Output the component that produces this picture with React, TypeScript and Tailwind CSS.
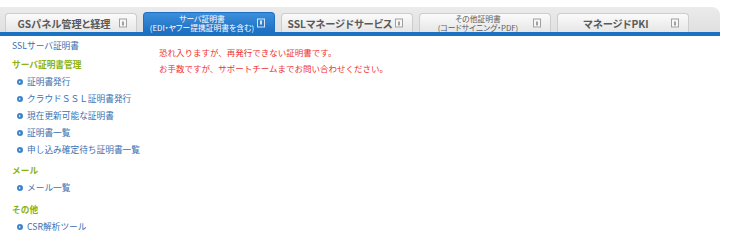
import React from "react";

const font = { fontFamily: '"Noto Sans CJK JP", "Noto Sans", sans-serif' };

function TabIcon({ active }: { active?: boolean }) {
  return (
    <span
      className={
        "inline-flex items-center justify-center w-[8px] h-[9px] border " +
        (active ? "border-white/80" : "border-[#a0a0a0] bg-[#f7f7f7]")
      }
    >
      <span className={"block w-[2px] h-[4px] " + (active ? "bg-white/80" : "bg-[#a0a0a0]")} />
    </span>
  );
}

function Tab({ lines, active }: { lines: string[]; active?: boolean }) {
  return (
    <div
      className={
        "relative w-[132px] rounded-t-[4px] flex items-center justify-center border border-b-0 [font-feature-settings:'palt'] " +
        (active
          ? "bg-gradient-to-b from-[#3b8fdc] to-[#1f6fc2] border-[#1f6fc2] text-white h-[20px]"
          : "bg-gradient-to-b from-[#fbfbfb] to-[#e6e6e6] border-[#cdcdcd] text-[#5a5a5a] h-[19px]")
      }
    >
      <div className="flex-1 flex flex-col items-center justify-center leading-[9px] pl-[2px] pr-[16px]">
        {lines.length === 1 ? (
          <span className="text-[10.2px] font-bold whitespace-nowrap">{lines[0]}</span>
        ) : (
          lines.map((l, i) => (
            <span key={i} className="text-[7.8px] leading-[9px] whitespace-nowrap">
              {l}
            </span>
          ))
        )}
      </div>
      <div className="absolute right-[9px] top-1/2 -translate-y-1/2 flex">
        <TabIcon active={active} />
      </div>
    </div>
  );
}

function Bullet() {
  return (
    <span className="w-[6px] h-[6px] rounded-full bg-[#3d84cc] flex items-center justify-center mr-[4px] shrink-0">
      <span className="block w-0 h-0 border-y-[1.5px] border-y-transparent border-l-[2px] border-l-white ml-[0.5px]" />
    </span>
  );
}

function Item({ children }: { children: React.ReactNode }) {
  return (
    <div className="flex items-center h-[17px] pl-[5px] text-[#3a6fb0] whitespace-nowrap">
      <Bullet />
      <span>{children}</span>
    </div>
  );
}

function Heading({ children, mt }: { children: React.ReactNode; mt: string }) {
  return <div className={"h-[16px] flex items-center font-bold text-[#8cb30f] " + mt}>{children}</div>;
}

export default function App() {
  return (
    <div className="w-[739px] h-[242px] bg-white overflow-hidden" style={font}>
      <div className="pt-[7px]">
        <div className="w-[720px] bg-gradient-to-b from-[#ebebeb] to-[#dedede] rounded-tr-[8px]">
          <div className="flex items-end gap-[6px] pl-[5px] h-[25px]">
            <Tab lines={["GSパネル管理と経理"]} />
            <Tab active lines={["サーバ証明書", "(EDI・ヤフー提携証明書を含む)"]} />
            <Tab lines={["SSLマネージドサービス"]} />
            <Tab lines={["その他証明書", "(コードサイニング・PDF)"]} />
            <Tab lines={["マネージドPKI"]} />
          </div>
          <div className="h-[4px] bg-[#1a72c2]" />
        </div>
      </div>
      <div className="flex text-[8.7px]">
        <div className="w-[147px] shrink-0 pl-[12px] pt-[2px]">
          <div className="h-[16px] flex items-center text-[#3a6fb0]">SSLサーバ証明書</div>
          <Heading mt="mt-[3px]">サーバ証明書管理</Heading>
          <Item>証明書発行</Item>
          <Item>クラウドＳＳＬ証明書発行</Item>
          <Item>現在更新可能な証明書</Item>
          <Item>証明書一覧</Item>
          <Item>申し込み確定待ち証明書一覧</Item>
          <Heading mt="mt-[5px]">メール</Heading>
          <Item>メール一覧</Item>
          <Heading mt="mt-[6px]">その他</Heading>
          <Item>CSR解析ツール</Item>
        </div>
        <div className="pl-[12px] pt-[8px] text-[#f03232] leading-[16px] text-[8.5px]">
          <div>恐れ入りますが、再発行できない証明書です。</div>
          <div>お手数ですが、サポートチームまでお問い合わせください。</div>
        </div>
      </div>
    </div>
  );
}
